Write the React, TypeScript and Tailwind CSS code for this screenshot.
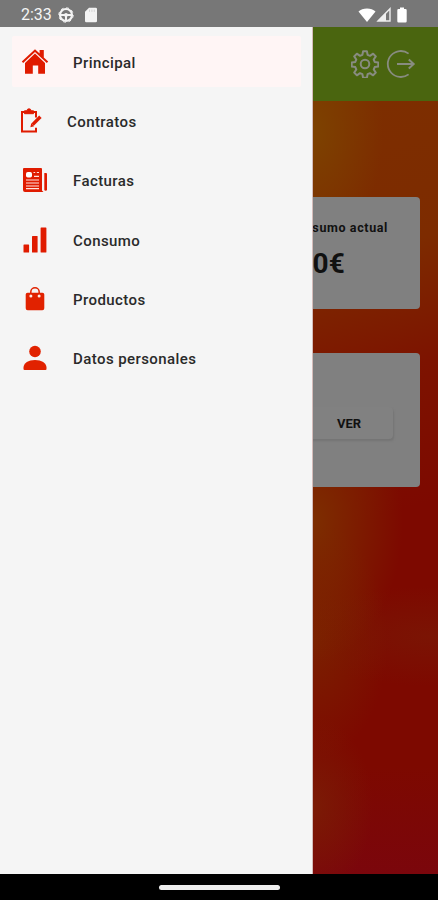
import type { ReactNode } from 'react';

const HomeIcon = () => (
  <svg width="28" height="28" viewBox="0 0 28 28" fill="#e01b00">
    <path d="M14 1.2 18.6 5.6V2h4.2v7.4l4.4 4.2-1.4 1.5L14 4.1 2.2 15.1.8 13.6z" />
    <path d="M14 5.600 24 15v10.800h-6.800v-8.200h-5.400v8.200H4V15z" />
  </svg>
);

const ContractIcon = () => (
  <svg width="22" height="26" viewBox="0 0 22 26" fill="none" stroke="#e01b00">
    <path strokeWidth="2" d="M16 9.500V4H2v19.600h14v-3.800" />
    <path strokeWidth="1" fill="#e01b00" d="M4.500 5.700V2.800h2.500a2 2 0 0 1 4 0h2.500v2.900z" />
    <path strokeWidth="3.400" d="m12.600 16.600 7.800-7.800" />
    <path stroke="none" fill="#e01b00" d="m11.200 15.200 3 3-3.800 1z" />
  </svg>
);

const InvoiceIcon = () => (
  <svg width="26" height="26" viewBox="0 0 26 26" fill="#e01b00">
    <path d="M2 1h17a1 1 0 0 1 1 1v21.500l1.500 1.500H3a2 2 0 0 1-2-2V2a1 1 0 0 1 1-1z" />
    <path d="M22.300 6H24a1 1 0 0 1 1 1v15.500a1.350 1.350 0 0 1-2.700 0z" />
    <rect x="4" y="5" width="6" height="5.500" rx="1.800" fill="#fff" />
    <path
      stroke="#ffe3df"
      strokeWidth="1.200"
      d="M11.500 5.500h1.700m1.600 0H17M12 9.400h5M4 13h13M4 16h13M4 19h13M4 21.600h13"
    />
  </svg>
);

const ConsumptionIcon = () => (
  <svg width="24" height="26" viewBox="0 0 24 26" fill="#e01b00">
    <rect x=".5" y="17.500" width="5.600" height="8" rx=".6" />
    <rect x="9" y="9" width="5.600" height="16.500" rx=".6" />
    <rect x="17.600" y=".5" width="5.800" height="25" rx=".6" />
  </svg>
);

const BagIcon = () => (
  <svg width="20" height="24" viewBox="0 0 20 24" fill="#e12200">
    <path d="M2.500 5.800h15A1.800 1.800 0 0 1 19.300 7.600v13.600a2 2 0 0 1-2 2H2.700a2 2 0 0 1-2-2V7.600a1.800 1.800 0 0 1 1.800-1.800z" />
    <path fill="none" stroke="#e12200" strokeWidth="1.500" d="M5.800 8V5a4.200 4.200 0 0 1 8.400 0v3" />
    <circle cx="5.900" cy="9" r="1.500" fill="#ffe9e4" />
    <circle cx="14.100" cy="9" r="1.500" fill="#ffe9e4" />
  </svg>
);

const PersonIcon = () => (
  <svg width="24" height="26" viewBox="0 0 24 26" fill="#e12200">
    <circle cx="12" cy="6.500" r="5.800" />
    <path d="M.5 24v-1.500C.5 18 5.500 15 12 15s11.500 3 11.500 7.500V24a1 1 0 0 1-1 1h-21a1 1 0 0 1-1-1z" />
  </svg>
);

const GearIcon = () => (
  <svg width="28" height="28" viewBox="0 0 28 28" fill="none" stroke="#888c80" strokeWidth="2">
    <path
      strokeLinejoin="round"
      d="M12.100 1.200h3.800l.7 3.600 2.400 1 3.100-2.100 2.700 2.700-2.100 3.100 1 2.400 3.600.7v3.800l-3.600.7-1 2.400 2.100 3.100-2.700 2.700-3.100-2.100-2.400 1-.7 3.600h-3.800l-.7-3.600-2.400-1-3.100 2.100-2.700-2.700 2.100-3.100-1-2.400-3.600-.7v-3.800l3.600-.7 1-2.400-2.100-3.100 2.700-2.700L9 5.800l2.400-1z"
    />
    <circle cx="14" cy="14" r="4.300" />
  </svg>
);

const LogoutIcon = () => (
  <svg width="30" height="28" viewBox="0 0 30 28" fill="none" stroke="#888c80" strokeWidth="1.800">
    <path d="M22.600 3.600A13 13 0 1 0 22.600 24.400" />
    <path strokeWidth="2" d="M11 14h16.500M22.800 9.400l4.900 4.600-4.900 4.600" />
  </svg>
);

const menu: { label: string; icon: ReactNode; active?: boolean; narrow?: boolean }[] = [
  { label: 'Principal', icon: <HomeIcon />, active: true },
  { label: 'Contratos', icon: <ContractIcon />, narrow: true },
  { label: 'Facturas', icon: <InvoiceIcon /> },
  { label: 'Consumo', icon: <ConsumptionIcon /> },
  { label: 'Productos', icon: <BagIcon /> },
  { label: 'Datos personales', icon: <PersonIcon /> },
];

function StatusBar() {
  return (
    <div className="flex h-[27px] shrink-0 items-center bg-[#777777] pt-0.5 pr-[31px] pl-[21px] text-[#f5f5f5]">
      <span className="w-[37px] text-[16px] leading-none">2:33</span>
      <svg width="16" height="16" viewBox="0 0 16 16" fill="none" stroke="#f3f3f3">
        <circle cx="8" cy="8" r="6" strokeWidth="2.200" />
        <circle cx="8" cy="8" r="7.200" strokeWidth="1" strokeDasharray="2.800 2.855" />
        <path strokeWidth="2" d="M2.500 8h11M8 8v5.500" />
        <circle cx="8" cy="8" r="1.900" fill="#f3f3f3" stroke="none" />
      </svg>
      <svg className="ml-[10px]" width="14" height="16" viewBox="0 0 14 16" fill="#f3f3f3">
        <path d="M5 .8h6.700a1.300 1.300 0 0 1 1.300 1.300v11.800a1.300 1.300 0 0 1-1.300 1.300H2.300A1.300 1.300 0 0 1 1 13.900V4.800z" />
        <path stroke="#ccc" strokeWidth=".8" d="M5.500 2.500v2.400M7.900 2.500v2.400M10.300 2.500v2.400" />
      </svg>
      <svg className="ml-auto" width="18" height="14" viewBox="0 0 18 14" fill="#fff">
        <path d="M9 14 .5 3.400C2.600 1.500 5.500.4 9 .4s6.400 1.100 8.500 3z" />
      </svg>
      <svg width="16" height="15" viewBox="0 0 16 15" fill="none" stroke="#eee">
        <path strokeWidth="1.400" d="M2 14 14 1.800V14z" />
        <path fill="#eee" stroke="none" d="M1.500 14 10 5.500V14z" />
      </svg>
      <svg className="ml-[5px]" width="10" height="16" viewBox="0 0 10 16" fill="#fff">
        <path d="M3 .5h4V2h1.500A1.200 1.200 0 0 1 9.700 3.200v11A1.200 1.200 0 0 1 8.500 15.400h-7A1.200 1.200 0 0 1 .3 14.200v-11A1.200 1.200 0 0 1 1.500 2H3z" />
      </svg>
    </div>
  );
}

function Drawer() {
  return (
    <nav className="absolute inset-y-0 left-0 w-[313px] border-r border-[#d5bcba] bg-[#f5f5f5] pt-[9px] pl-3">
      <ul className="flex flex-col gap-[8.400px]">
        {menu.map(({ label, icon, active, narrow }) => (
          <li
            key={label}
            className={`flex h-[51px] w-[289px] items-center rounded-xs ${active ? 'bg-[#fff5f5]' : ''}`}
          >
            <span className={`ml-2 flex justify-center ${narrow ? 'w-[22px]' : 'w-[29px]'}`}>
              {icon}
            </span>
            <span
              className={`pt-[2.500px] text-[15px] font-medium tracking-[0.420px] text-[#2a2a2a] ${narrow ? 'ml-[25px]' : 'ml-[24px]'}`}
            >
              {label}
            </span>
          </li>
        ))}
      </ul>
    </nav>
  );
}

export default function App() {
  return (
    <div className="flex h-[900px] w-[438px] flex-col overflow-hidden bg-black font-[Roboto,sans-serif]">
      <StatusBar />
      <div className="relative flex min-h-0 flex-1 flex-col bg-[#7d0900]">
        <header className="flex h-[74px] shrink-0 items-center justify-end gap-[7px] bg-[#4a650f] pr-[22px]">
          <GearIcon />
          <LogoutIcon />
        </header>
        <main className="flex flex-1 flex-col gap-11 bg-[radial-gradient(ellipse_70px_120px_at_313px_30px,#7d4200,transparent),radial-gradient(ellipse_90px_140px_at_313px_420px,#7d2e00,transparent),radial-gradient(ellipse_75px_120px_at_313px_540px,#7b2000,transparent),radial-gradient(ellipse_60px_90px_at_313px_705px,#7b1b05,transparent),radial-gradient(ellipse_140px_50px_at_430px_535px,#7b1404,transparent),linear-gradient(to_bottom,transparent_86%,#7b060c),linear-gradient(165deg,#7d3000_0%,#7d2b00_28%,#7d1300_42%,#7d0900_58%)] px-[18px] pt-24">
          <section className="flex h-28 flex-col items-end rounded bg-[#808080] pt-[21px] pr-8 text-[#111]">
            <p className="text-[12.500px] leading-[19px] font-bold tracking-[0.620px]">Consumo actual</p>
            <p className="mt-[9px] mr-[43px] text-[28px] leading-9 font-bold tracking-[0.200px]">0€</p>
          </section>
          <section className="flex h-[134px] items-center justify-end rounded bg-[#808080] pr-[27px]">
            <button className="mt-[6px] h-8 w-[88px] rounded-sm bg-[#818181] pt-px text-[13px] font-bold text-[#111] shadow-[1px_2px_2px_#747474]">
              VER
            </button>
          </section>
        </main>
        <Drawer />
      </div>
      <footer className="flex h-[26px] shrink-0 items-center justify-center">
        <div className="h-[5px] w-[121px] rounded-full bg-[#eeeeee]" />
      </footer>
    </div>
  );
}
